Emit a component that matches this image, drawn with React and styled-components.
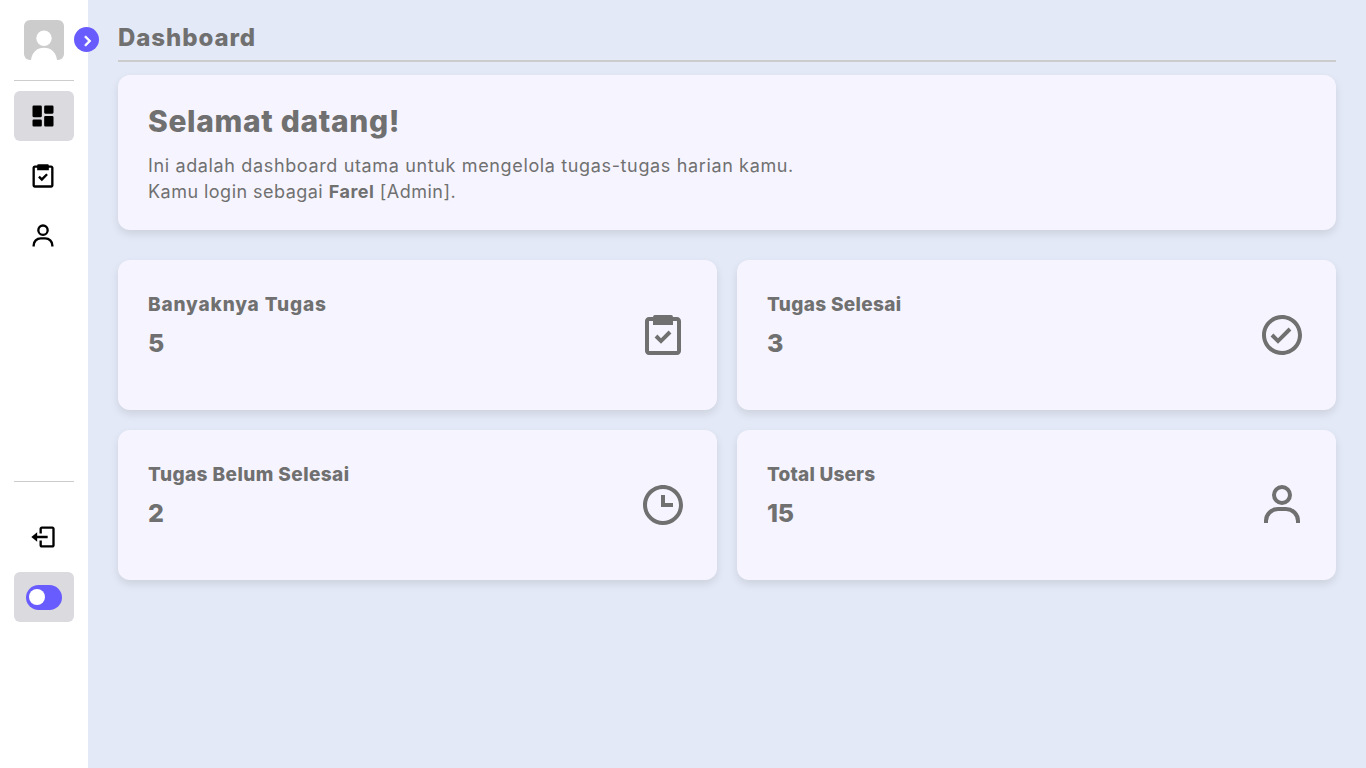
import React from "react";
import styled, { createGlobalStyle } from "styled-components";
import {
  BiSolidDashboard, BiTask, BiUser, BiLogOut, BiChevronRight, BiCheckCircle, BiTime,
} from "react-icons/bi";

const GlobalStyle = createGlobalStyle`
  * { box-sizing: border-box; margin: 0; padding: 0; }
  body { background: #e4e9f7; font-family: Inter, "Open Sans", sans-serif; color: #707070; }
`;

const Layout = styled.div`
  display: flex;
  height: 768px;
  overflow: hidden;
`;

const Sidebar = styled.aside`
  position: relative;
  display: flex;
  flex-direction: column;
  width: 88px;
  flex: none;
  padding: 20px 14px;
  background: #fff;
`;

const Avatar = styled.svg`
  display: block;
  width: 40px;
  height: 40px;
  margin: 0 10px;
  border-radius: 6px;
  flex: none;
`;

const Toggle = styled.button`
  position: absolute;
  top: 27px;
  right: -11px;
  display: flex;
  align-items: center;
  justify-content: center;
  width: 25px;
  height: 25px;
  padding: 3px 0 0 1px;
  border: 0;
  border-radius: 50%;
  background: #695cfe;
  color: #fff;
  font-size: 22px;
  & > svg { flex: none; stroke: currentColor; stroke-width: 0.7px; }
`;

const Divider = styled.hr`
  border: 0;
  height: 1px;
  flex: none;
  background: #ccc;
  margin-top: ${(p) => p.$top}px;
`;

const NavItem = styled.a`
  display: flex;
  align-items: center;
  flex: none;
  height: 50px;
  margin-top: ${(p) => p.$top ?? 10}px;
  padding-left: 15px;
  border-radius: 6px;
  background: ${(p) => (p.$active ? "#dbdadf" : "transparent")};
  color: #000;
  font-size: 28px;
`;

const ModeBox = styled.div`
  display: flex;
  align-items: center;
  justify-content: center;
  flex: none;
  height: 50px;
  margin-top: 10px;
  border-radius: 6px;
  background: #dbdadf;
`;

const Switch = styled.div`
  display: flex;
  align-items: center;
  width: 36px;
  height: 25px;
  padding: 0 3px;
  border-radius: 13px;
  background: #695cfe;
`;

const Knob = styled.span`
  width: 16px;
  height: 16px;
  border-radius: 50%;
  background: #fff;
`;

const Main = styled.main`
  flex: 1;
  padding: 18px 30px;
`;

const PageTitle = styled.h1`
  height: 44px;
  border-bottom: 2px solid #ccc;
  font-size: 24px;
  line-height: 40px;
  font-weight: 800;
  letter-spacing: ${(p) => p.$spacing}px;
`;

const Card = styled.section`
  border-radius: 12px;
  background: #f6f5ff;
  box-shadow: 0 4px 8px rgba(0, 0, 0, 0.1);
`;

const Welcome = styled(Card)`
  height: 155px;
  margin: 13px 0 30px;
  padding: 23px 30px;
`;

const Greeting = styled.h2`
  font-size: 30px;
  line-height: 46px;
  font-weight: 800;
  letter-spacing: ${(p) => p.$spacing}px;
`;

const Line = styled.p`
  font-size: 18px;
  line-height: 26px;
  letter-spacing: ${(p) => p.$spacing}px;
  &:first-of-type { margin-top: 9px; }
`;

const Grid = styled.div`
  display: grid;
  grid-template-columns: 1fr 1fr;
  gap: 20px;
`;

const StatCard = styled(Card)`
  display: flex;
  align-items: center;
  justify-content: space-between;
  height: 150px;
  padding: 0 30px;
  & > svg { font-size: 48px; }
`;

const StatText = styled.div`
  align-self: flex-start;
  padding-top: 30px;
`;

const StatTitle = styled.h3`
  font-size: 19px;
  line-height: 30px;
  font-weight: 800;
  letter-spacing: ${(p) => p.$spacing}px;
`;

const StatValue = styled.p`
  margin-top: 3px;
  font-size: 25px;
  line-height: 40px;
  font-weight: 800;
  letter-spacing: -0.4px;
`;

const stats = [
  { title: "Banyaknya Tugas", value: 5, Icon: BiTask, spacing: 0.86 },
  { title: "Tugas Selesai", value: 3, Icon: BiCheckCircle, spacing: 0.34 },
  { title: "Tugas Belum Selesai", value: 2, Icon: BiTime, spacing: 0.43 },
  { title: "Total Users", value: 15, Icon: BiUser, spacing: 0.2 },
];

export default function App() {
  return (
    <Layout>
      <GlobalStyle />
      <Sidebar>
        <Avatar viewBox="0 0 40 40">
          <rect width="40" height="40" fill="#ccc" />
          <circle cx="20" cy="18.3" r="7.7" fill="#fff" />
          <path d="M7 40C8 32 13 27.700 20 27.700S32 32 33 40Z" fill="#fff" />
        </Avatar>
        <Toggle><BiChevronRight /></Toggle>
        <Divider $top={20} />
        <NavItem $active><BiSolidDashboard /></NavItem>
        <NavItem><BiTask /></NavItem>
        <NavItem><BiUser /></NavItem>
        <Divider $top={220} />
        <NavItem $top={30}><BiLogOut /></NavItem>
        <ModeBox><Switch><Knob /></Switch></ModeBox>
      </Sidebar>
      <Main>
        <PageTitle $spacing={0.93}>Dashboard</PageTitle>
        <Welcome>
          <Greeting $spacing={0.65}>Selamat datang!</Greeting>
          <Line $spacing={0.64}>Ini adalah dashboard utama untuk mengelola tugas-tugas harian kamu.</Line>
          <Line $spacing={0.47}>Kamu login sebagai <b>Farel</b> [Admin].</Line>
        </Welcome>
        <Grid>
          {stats.map(({ title, value, Icon, spacing }) => (
            <StatCard key={title}>
              <StatText>
                <StatTitle $spacing={spacing}>{title}</StatTitle>
                <StatValue>{value}</StatValue>
              </StatText>
              <Icon />
            </StatCard>
          ))}
        </Grid>
      </Main>
    </Layout>
  );
}
